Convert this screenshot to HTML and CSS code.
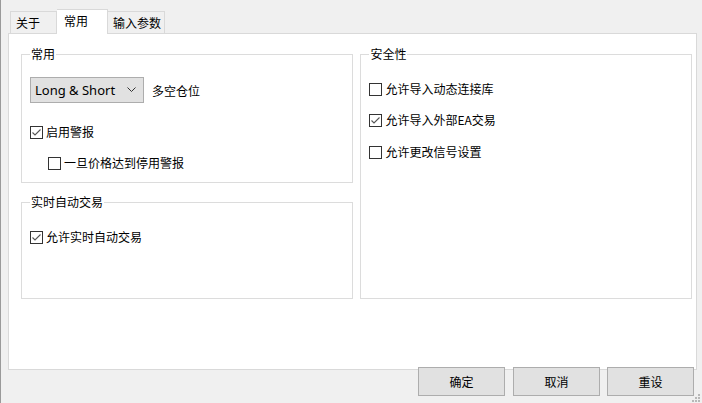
FILE: index.html
```html
<!DOCTYPE html>
<html lang="zh-CN">

<head>
  <meta charset="utf-8">
  <title>常用</title>
  <link rel="stylesheet" href="styles.css">
</head>

<body>
  <div class="dialog">
    <div class="tabs">
      <div class="tab t-about">关于</div>
      <div class="tab t-common active">常用</div>
      <div class="tab t-input">输入参数</div>
    </div>
    <div class="panel">
      <div class="col">
        <fieldset class="group g-common">
          <legend>常用</legend>
          <div class="row-select">
            <div class="select">
              <span>Long &amp; Short</span>
              <svg class="chev" width="9" height="5" viewBox="0 0 9 5"><path d="M0.5 0.5 L4.5 4.5 L8.5 0.5" fill="none" stroke="#333" stroke-width="1"/></svg>
            </div>
            <span class="select-label">多空仓位</span>
          </div>
          <label class="check c-alert"><span class="box"><svg class="tick" width="11" height="11" viewBox="0 0 11 11"><path d="M1.5 5.5 L4 8 L9.5 2.5" fill="none" stroke="#555" stroke-width="1.1"/></svg></span>启用警报</label>
          <label class="check c-sub"><span class="box"></span>一旦价格达到停用警报</label>
        </fieldset>
        <fieldset class="group g-live">
          <legend>实时自动交易</legend>
          <label class="check c-live"><span class="box"><svg class="tick" width="11" height="11" viewBox="0 0 11 11"><path d="M1.5 5.5 L4 8 L9.5 2.5" fill="none" stroke="#555" stroke-width="1.1"/></svg></span>允许实时自动交易</label>
        </fieldset>
      </div>
      <fieldset class="group g-safe">
        <legend>安全性</legend>
        <label class="check c-s1"><span class="box"></span>允许导入动态连接库</label>
        <label class="check c-s2"><span class="box"><svg class="tick" width="11" height="11" viewBox="0 0 11 11"><path d="M1.5 5.5 L4 8 L9.5 2.5" fill="none" stroke="#555" stroke-width="1.1"/></svg></span>允许导入外部EA交易</label>
        <label class="check c-s3"><span class="box"></span>允许更改信号设置</label>
      </fieldset>
    </div>
    <div class="buttons">
      <button class="btn">确定</button>
      <button class="btn">取消</button>
      <button class="btn">重设</button>
    </div>
  </div>
  <svg class="grip" width="8" height="8" viewBox="0 0 8 8">
    <rect x="6" y="0" width="2" height="2" fill="#b8b8b8"/>
    <rect x="3" y="3" width="2" height="2" fill="#b8b8b8"/>
    <rect x="6" y="3" width="2" height="2" fill="#b8b8b8"/>
    <rect x="0" y="6" width="2" height="2" fill="#b8b8b8"/>
    <rect x="3" y="6" width="2" height="2" fill="#b8b8b8"/>
    <rect x="6" y="6" width="2" height="2" fill="#b8b8b8"/>
  </svg>
</body>

</html>
```

FILE: styles.css
```css
html,
body {
  margin: 0;
  height: 100%;
}

body {
  font-family: "Noto Sans", "Noto Sans CJK SC", sans-serif;
  font-size: 12px;
  color: #000;
  background-color: #f0f0f0;
  border-left: 1px solid #9a9a9a;
  box-sizing: border-box;
  position: relative;
  overflow: hidden;
}

.dialog {
  padding: 9px 5px 0 7px;
}

.tabs {
  display: flex;
  align-items: flex-end;
  height: 24px;
  padding-left: 2px;
  position: relative;
  z-index: 1;
}

.tab {
  line-height: 21px;
  box-sizing: border-box;
  height: 22px;
  padding-left: 5px;
  border: 1px solid #d9d9d9;
  border-bottom: none;
  background-color: #f0f0f0;
  font-family: "Noto Sans CJK SC", sans-serif;
}

.t-about {
  width: 47px;
}

.t-common {
  width: 51px;
}

.t-input {
  width: 57px;
}

.tab.active {
  height: 25px;
  line-height: 22px;
  margin-bottom: -1px;
  padding-left: 7px;
  background-color: #fff;
}

.tab + .tab {
  border-left: none;
}

.panel {
  border: 1px solid #d9d9d9;
  background-color: #fff;
  display: flex;
  gap: 7px;
  padding: 12px 4px 0 12px;
  box-sizing: border-box;
  height: 337px;
}

.col {
  display: flex;
  flex-direction: column;
  width: 334px;
}

.group {
  margin: 0;
  padding: 0 8px;
  border: 1px solid #dcdcdc;
  min-width: 0;
  box-sizing: border-box;
}

.group legend {
  padding: 0 1px;
  margin-left: 0;
  line-height: 16px;
  font-family: "Noto Sans CJK SC", sans-serif;
}

.g-common {
  height: 137px;
  padding-top: 15px;
}

.g-live {
  margin-top: 11px;
  height: 105px;
  padding-top: 19px;
}

.g-safe {
  width: 333px;
  height: 253px;
  padding-top: 19px;
}

.row-select {
  display: flex;
  align-items: center;
  gap: 8px;
}

.select {
  width: 114px;
  height: 26px;
  box-sizing: border-box;
  border: 1px solid #adadad;
  background-color: #e1e1e1;
  display: flex;
  align-items: center;
  justify-content: space-between;
  padding: 0 7px 1px 4px;
  font-size: 13px;
}

.chev {
  display: block;
}

.select-label {
  font-family: "Noto Sans CJK SC", sans-serif;
}

.check {
  display: flex;
  align-items: center;
  height: 16px;
  line-height: 16px;
  font-family: "Noto Sans CJK SC", sans-serif;
}

.box {
  width: 13px;
  height: 13px;
  box-sizing: border-box;
  border: 1px solid #333;
  background-color: #fff;
  margin-right: 3px;
}

.tick {
  display: block;
}

.c-alert {
  margin-top: 21px;
}

.c-sub {
  margin-top: 15px;
  margin-left: 18px;
}

.c-s2 {
  margin-top: 15px;
}

.c-s3 {
  margin-top: 16px;
}

.buttons {
  display: flex;
  justify-content: flex-end;
  gap: 8px;
  margin-top: -3px;
  padding-right: 3px;
  position: relative;
}

.btn {
  width: 87px;
  height: 29px;
  box-sizing: border-box;
  border: 1px solid #adadad;
  background-color: #e1e1e1;
  font-family: "Noto Sans CJK SC", sans-serif;
  font-size: 12px;
  color: #000;
  padding: 0;
}

.btn:last-child {
  margin-left: -1px;
}

.grip {
  position: absolute;
  right: 2px;
  bottom: 1px;
}
```
